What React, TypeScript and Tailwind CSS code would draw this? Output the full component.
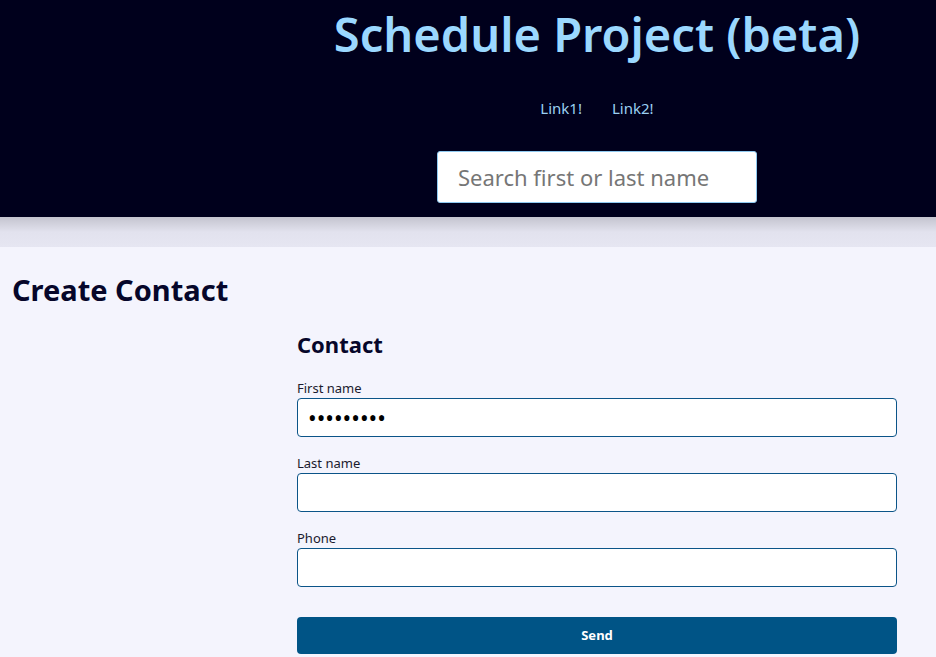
import React from "react";

const font = { fontFamily: '"Noto Sans", "Open Sans", sans-serif' };

function Field({ label, value }: { label: string; value?: string }) {
  return (
    <div className="flex flex-col">
      <label className="text-[13px] leading-[18px] text-[#1a1a2e] mb-[1px]">{label}</label>
      <input
        type={value ? "password" : "text"}
        defaultValue={value}
        className={
          value
            ? "h-[39px] w-full rounded-[4px] border border-[#0b5488] bg-white px-[10px] text-[23px] text-black outline-none"
            : "h-[39px] w-full rounded-[4px] border border-[#0b5488] bg-white px-[10px] text-[16px] text-black outline-none"
        }
      />
    </div>
  );
}

export default function App() {
  return (
    <div className="min-h-[657px] bg-[#f4f4fd]" style={font}>
      <header className="flex h-[217px] bg-[#00001c]">
        <div className="w-[258px] shrink-0" />
        <div className="flex flex-1 flex-col items-center">
          <h1 className="mt-[2px] text-[47px] font-semibold leading-[64px] text-[#9bd8ff]">
            Schedule Project (beta)
          </h1>
          <nav className="mt-[32px] flex gap-[30px] text-[15px] leading-[20px] text-[#9bd0f2]">
            <a href="#">Link1!</a>
            <a href="#">Link2!</a>
          </nav>
          <input
            placeholder="Search first or last name"
            className="mt-[33px] h-[52px] w-[320px] rounded-[3px] border border-[#8ec9f0] bg-white px-[20px] text-[22px] text-black placeholder:text-[#767676] outline-none"
          />
        </div>
      </header>
      <div className="h-[30px] bg-gradient-to-b from-[#c4c4cf] via-[#e2e2ee] to-[#e6e6f2]" />
      <main className="flex flex-col">
        <h2 className="ml-[12px] mt-[24px] text-[29px] font-bold leading-[38px] text-[#06062a]">
          Create Contact
        </h2>
        <div className="flex">
          <div className="w-[258px] shrink-0" />
          <form className="mx-[39px] flex flex-1 flex-col" onSubmit={(e) => e.preventDefault()}>
            <h3 className="mt-[20px] text-[22px] font-bold leading-[30px] text-[#06062a]">Contact</h3>
            <div className="mt-[20px] flex flex-col gap-[17px]">
              <Field label="First name" value="secret123" />
              <Field label="Last name" />
              <Field label="Phone" />
            </div>
            <button className="mt-[30px] h-[37px] w-full rounded-[4px] bg-[#005486] text-[13px] font-bold text-white">
              Send
            </button>
          </form>
        </div>
      </main>
    </div>
  );
}
